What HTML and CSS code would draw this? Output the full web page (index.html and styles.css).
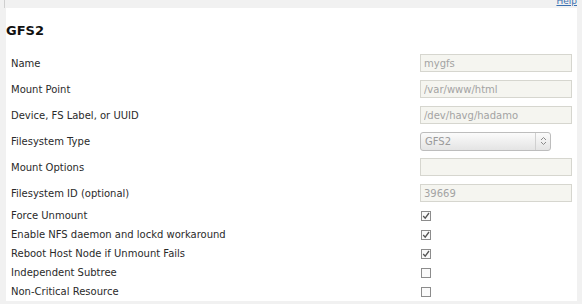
FILE: index.html
```html
<!DOCTYPE html>
<html lang="en">
<head>
    <meta charset="UTF-8">
    <meta name="viewport" content="width=device-width, initial-scale=1.0">
    <link rel="stylesheet" href="styles.css">
    <title>GFS2</title>
</head>
<body>

    <div class="topbar">
        <a href="#" class="help">Help</a>
    </div>

    <div class="panel">
        <h2 class="titulo">GFS2</h2>

        <div class="formulario">
            <div class="fila"><span class="etiqueta">Name</span><input class="campo" type="text" value="mygfs"></div>
            <div class="fila"><span class="etiqueta">Mount Point</span><input class="campo" type="text" value="/var/www/html"></div>
            <div class="fila"><span class="etiqueta">Device, FS Label, or UUID</span><input class="campo" type="text" value="/dev/havg/hadamo"></div>
            <div class="fila">
                <span class="etiqueta">Filesystem Type</span>
                <div class="selector">
                    <span class="selector-texto">GFS2</span>
                    <span class="selector-flechas">
                        <svg width="7" height="10" viewBox="0 0 7 10">
                            <path d="M1 4 L3.5 1.5 L6 4 M1 6 L3.5 8.5 L6 6" fill="none" stroke="#8a8a8a" stroke-width="1"/>
                        </svg>
                    </span>
                </div>
            </div>
            <div class="fila"><span class="etiqueta">Mount Options</span><input class="campo" type="text" value=""></div>
            <div class="fila"><span class="etiqueta">Filesystem ID (optional)</span><input class="campo" type="text" value="39669"></div>

            <!-- casillas -->
            <div class="fila-check"><span class="etiqueta">Force Unmount</span><span class="casilla marcada"></span></div>
            <div class="fila-check"><span class="etiqueta">Enable NFS daemon and lockd workaround</span><span class="casilla marcada"></span></div>
            <div class="fila-check"><span class="etiqueta">Reboot Host Node if Unmount Fails</span><span class="casilla marcada"></span></div>
            <div class="fila-check"><span class="etiqueta">Independent Subtree</span><span class="casilla"></span></div>
            <div class="fila-check"><span class="etiqueta">Non-Critical Resource</span><span class="casilla"></span></div>
        </div>
    </div>

</body>
</html>
```

FILE: styles.css
```css
body {
    margin: 0;
    background-color: #f1f1f1;
    font-family: "DejaVu Sans", sans-serif;
    color: #222222;
    height: 304px;
    overflow: hidden;
}

.topbar {
    height: 8px;
    display: flex;
    justify-content: flex-end;
    overflow: hidden;
    margin-left: 4px;
    border-left: 1px solid #cfcfcf;
    padding-right: 5px;
}

.help {
    font-size: 9px;
    line-height: 9px;
    margin-top: -3px;
    color: #3a6fb0;
}

.panel {
    background-color: #ffffff;
    margin: 0 5px 0 6px;
    height: 293px;
    padding-top: 15px;
    box-sizing: border-box;
}

.titulo {
    margin: 0 0 11px 0;
    font-size: 13px;
    line-height: 16px;
    font-weight: bold;
    color: #111111;
}

.formulario {
    padding: 0 5px;
}

.fila,
.fila-check {
    display: grid;
    grid-template-columns: 1fr 152px;
    align-items: center;
}

.fila {
    height: 26px;
}

.fila-check {
    height: 19px;
}

.etiqueta {
    font-size: 10px;
    color: #2a2a2a;
}

.campo {
    box-sizing: border-box;
    width: 152px;
    height: 18px;
    margin: 0;
    padding: 0 3px;
    border: 1px solid #d6d6cf;
    background-color: #f5f5f0;
    color: #a3a3a3;
    font-family: "DejaVu Sans", sans-serif;
    font-size: 10px;
}

.selector {
    box-sizing: border-box;
    width: 131px;
    height: 19px;
    border: 1px solid #bdbdbd;
    border-radius: 3px;
    background: linear-gradient(#fbfbfb, #e4e4e4);
    display: flex;
    align-items: center;
    font-size: 10px;
    color: #9a9a9a;
}

.selector-texto {
    flex: 1;
    padding-left: 4px;
}

.selector-flechas {
    width: 14px;
    height: 100%;
    border-left: 1px solid #d0d0d0;
    display: flex;
    align-items: center;
    justify-content: center;
}

.casilla {
    box-sizing: border-box;
    width: 10px;
    height: 10px;
    margin-left: 1px;
    border: 1px solid #8c8c8c;
    background-color: #fafafa;
}

.marcada {
    background-image: url("data:image/svg+xml,%3Csvg xmlns='http://www.w3.org/2000/svg' width='8' height='8' viewBox='0 0 8 8'%3E%3Cpath d='M1.2 4 L3.2 6.2 L7 1' fill='none' stroke='%23555' stroke-width='1.3'/%3E%3C/svg%3E");
    background-repeat: no-repeat;
    background-position: center;
}
```
